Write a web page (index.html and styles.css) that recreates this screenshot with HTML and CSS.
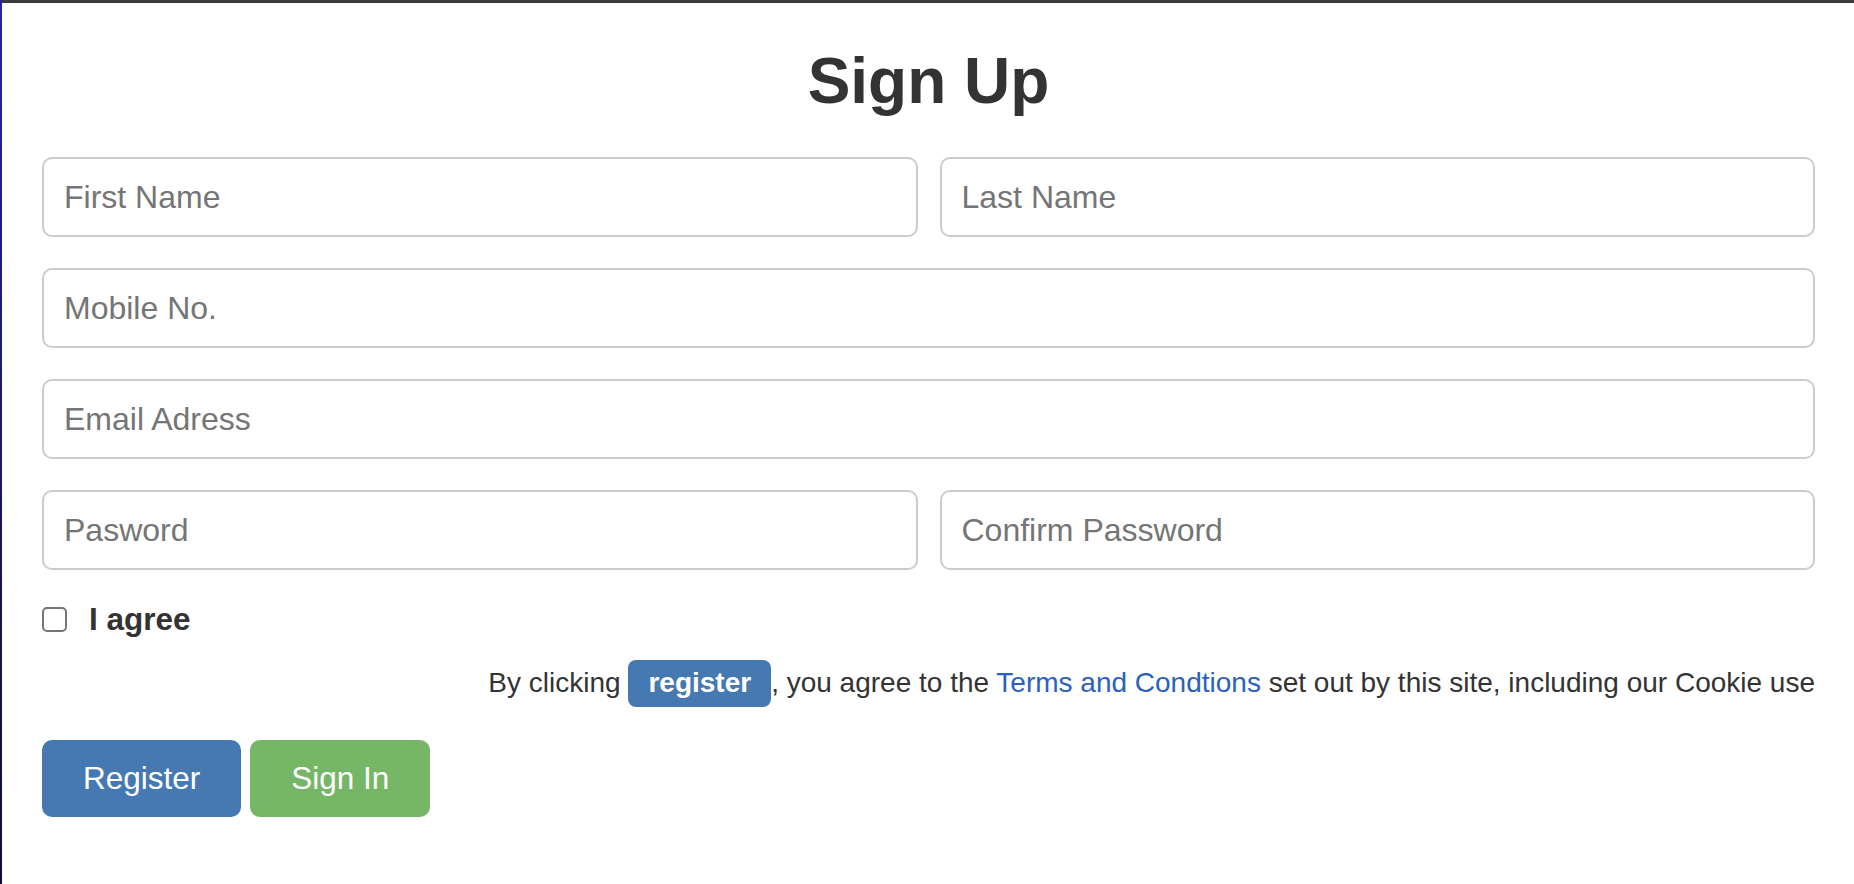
FILE: index.html
```html
<!DOCTYPE html>
<html lang="en">
<head>
<meta charset="utf-8">
<title>Sign Up</title>
<link rel="stylesheet" href="styles.css">
</head>
<body>
<main class="page">
  <h1 class="title">Sign Up</h1>
  <form class="form">
    <div class="row two">
      <input class="field" type="text" placeholder="First Name">
      <input class="field" type="text" placeholder="Last Name">
    </div>
    <div class="row">
      <input class="field" type="text" placeholder="Mobile No.">
    </div>
    <div class="row">
      <input class="field" type="email" placeholder="Email Adress">
    </div>
    <div class="row two">
      <input class="field" type="password" placeholder="Pasword">
      <input class="field" type="password" placeholder="Confirm Password">
    </div>
    <label class="agree"><input class="check" type="checkbox"><span>I agree</span></label>
    <p class="terms">By clicking <span class="badge">register</span>, you agree to the <a class="link" href="#">Terms and Condtions</a> set out by this site, including our Cookie use</p>
    <div class="actions">
      <button type="button" class="btn btn-primary">Register</button>
      <button type="button" class="btn btn-success">Sign In</button>
    </div>
  </form>
</main>
</body>
</html>
```
FILE: styles.css
```css
html, body {
  margin: 0;
  padding: 0;
}
body {
  min-height: 884px;
  background: linear-gradient(#2424a0, #0c0c3c) left top / 2px 100% no-repeat, #ffffff;
  font-family: "Liberation Sans", Arial, Helvetica, sans-serif;
  color: #333333;
}
.page {
  margin-left: 2px;
  border-top: 3px solid #3b3b3b;
  padding: 0 39px 0 40px;
  min-height: 881px;
  box-sizing: border-box;
}
.title {
  margin: 43px 0 41px;
  font-size: 64px;
  line-height: 70px;
  font-weight: bold;
  text-align: center;
  color: #333333;
}
.form {
  display: flex;
  flex-direction: column;
  margin: 0;
}
.row {
  display: flex;
  gap: 22px;
  margin-bottom: 31px;
}
.field {
  flex: 1 1 0;
  min-width: 0;
  height: 80px;
  box-sizing: border-box;
  border: 2px solid #cccccc;
  border-radius: 10px;
  padding: 0 20px;
  font-family: "Liberation Sans", Arial, Helvetica, sans-serif;
  font-size: 32px;
  color: #555555;
  background: #ffffff;
  outline: none;
}
.field::placeholder {
  color: #757575;
  opacity: 1;
}
.agree {
  display: flex;
  align-items: center;
  gap: 22px;
  font-size: 31.5px;
  line-height: 36px;
  font-weight: bold;
  color: #333333;
  margin-bottom: 23px;
}
.check {
  appearance: none;
  -webkit-appearance: none;
  margin: 0;
  width: 25px;
  height: 25px;
  box-sizing: border-box;
  border: 2px solid #767676;
  border-radius: 5px;
  background: #ffffff;
}
.terms {
  margin: 0 0 33px;
  text-align: right;
  font-size: 28px;
  line-height: 32px;
  color: #333333;
}
.badge {
  display: inline-block;
  padding: 9px 20px 10px;
  line-height: 28px;
  font-weight: bold;
  color: #ffffff;
  background: #4679b2;
  border-radius: 8px;
}
.link {
  color: #2a62c0;
  text-decoration: none;
}
.actions {
  display: flex;
  gap: 9px;
}
.btn {
  border: none;
  border-radius: 10px;
  padding: 0 41px;
  height: 77px;
  font-family: "Liberation Sans", Arial, Helvetica, sans-serif;
  font-size: 31.5px;
  color: #ffffff;
  cursor: pointer;
}
.btn-primary {
  background: #4679b2;
}
.btn-success {
  background: #76b667;
}
```
